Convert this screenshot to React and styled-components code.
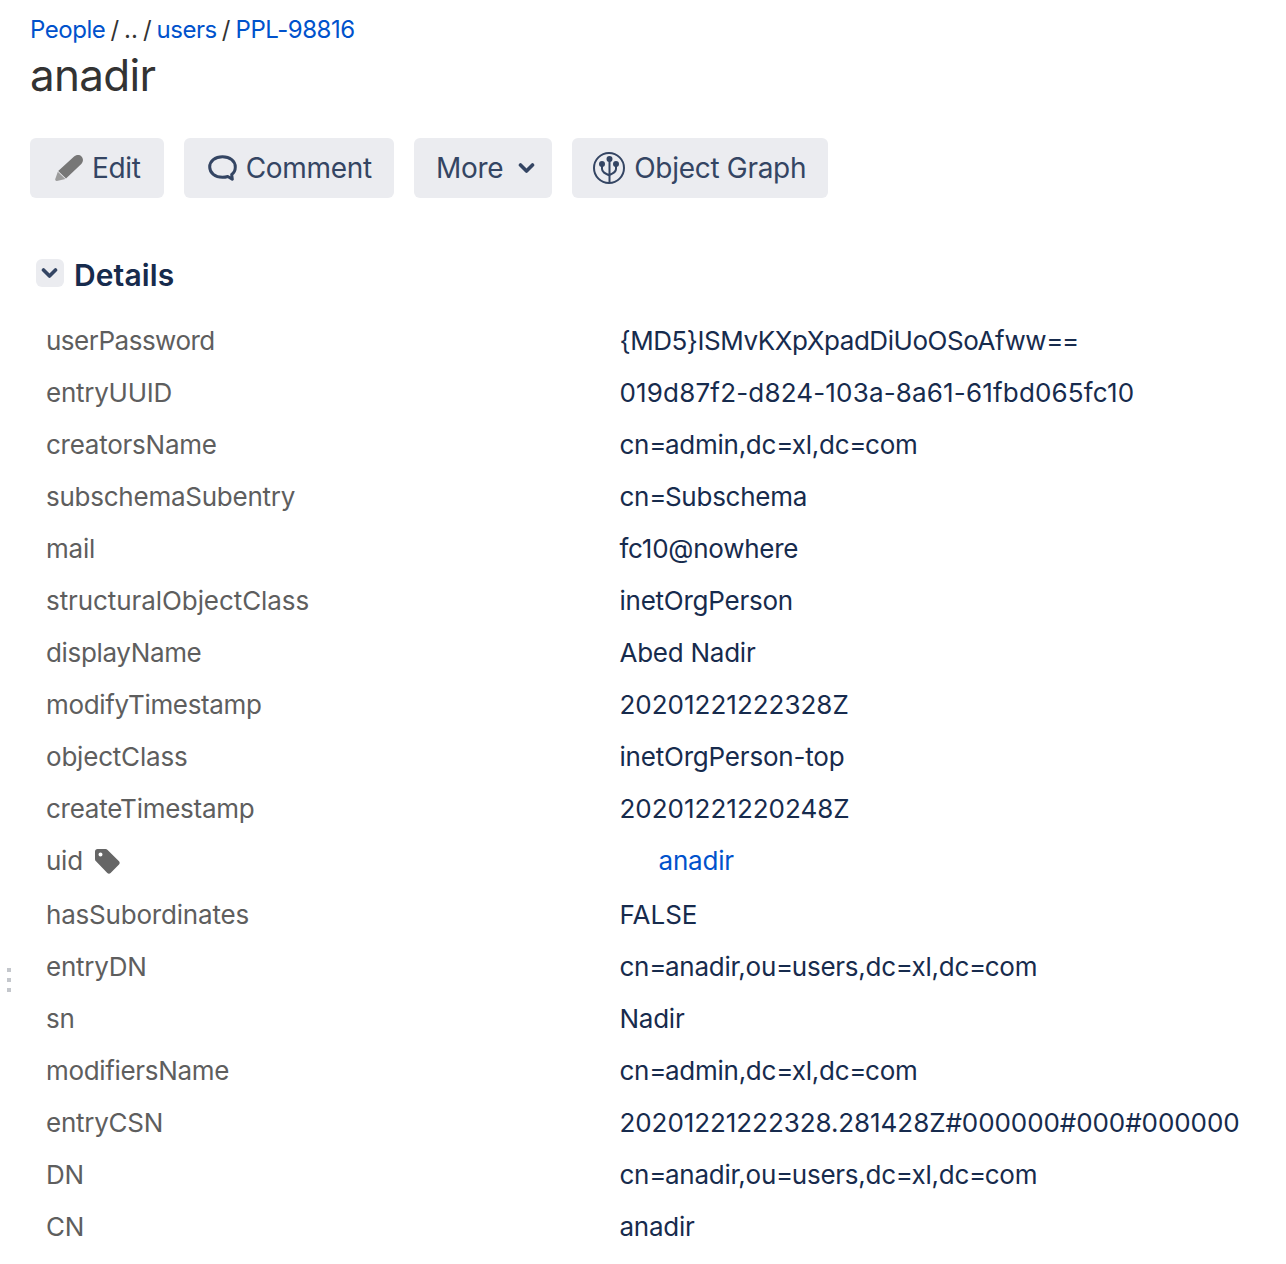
import React from 'react'
import styled, { createGlobalStyle } from 'styled-components'

const GlobalStyle = createGlobalStyle`
  html, body {
    margin: 0;
    padding: 0;
    background: #fff;
    font-family: Inter, "Liberation Sans", sans-serif;
  }
`

const Page = styled.div`
  position: relative;
  width: 1286px;
  height: 1264px;
  padding: 14px 0 0 30px;
  box-sizing: border-box;
  overflow: hidden;
`

const Breadcrumbs = styled.div`
  display: flex;
  gap: 5px;
  font-size: 24px;
  line-height: 32px;
  color: #333;
  a {
    color: #0052cc;
    text-decoration: none;
    letter-spacing: -0.45px;
  }
`

const Title = styled.h1`
  margin: 0;
  height: 60px;
  font-size: 44px;
  line-height: 58px;
  font-weight: 400;
  letter-spacing: -0.7px;
  color: #333;
`

const Toolbar = styled.div`
  display: flex;
  gap: 20px;
  margin-top: 32px;
`

const Button = styled.button`
  display: flex;
  align-items: center;
  gap: ${p => p.$gap || 9}px;
  height: 60px;
  padding: 0 ${p => p.$right || 22}px 0 ${p => p.$left || 22}px;
  border: 0;
  border-radius: 6px;
  background: #ebecf0;
  color: #344563;
  font-family: inherit;
  font-size: 28px;
  letter-spacing: -0.3px;
  svg {
    flex: none;
  }
`

const SectionHeader = styled.div`
  display: flex;
  align-items: center;
  gap: 10px;
  margin: 58px 0 0 6px;
  height: 38px;
`

const Toggle = styled.span`
  display: flex;
  align-items: center;
  justify-content: center;
  width: 28px;
  height: 28px;
  padding-right: 1px;
  box-sizing: border-box;
  border-radius: 6px;
  background: #ebecf0;
  margin-top: -4px;
`

const SectionTitle = styled.h2`
  margin: 0;
  font-size: 30px;
  line-height: 37px;
  font-weight: 600;
  letter-spacing: 0.1px;
  color: #172b4d;
`

const Rows = styled.div`
  margin: 21px 0 0 16px;
`

const Row = styled.div`
  display: grid;
  grid-template-columns: 573.5px 1fr;
  height: ${p => (p.$tall ? 54 : 52)}px;
  font-size: 26px;
  line-height: 52px;
`

const Label = styled.div`
  display: flex;
  align-items: center;
  gap: 12px;
  height: 52px;
  letter-spacing: ${p => p.$track}px;
  color: #5e5e5e;
`

const Value = styled.div`
  color: #172b4d;
  white-space: nowrap;
  letter-spacing: ${p => p.$track}px;
`

const Eq = styled.span`
  letter-spacing: -1.5px;
`

const ValueLink = styled.a`
  margin-left: 39px;
  color: #0052cc;
  text-decoration: none;
`

const Grip = styled.div`
  position: absolute;
  left: 7px;
  top: 968px;
  display: flex;
  flex-direction: column;
  gap: 6px;
  span {
    width: 4px;
    height: 4px;
    background: #c4c7cc;
  }
`

const Chevron = () => (
  <svg width="17" height="12" viewBox="0 0 17 12" fill="none">
    <path d="M2.500 3 8.500 9l6-6" stroke="#344563" strokeWidth="3.600" strokeLinecap="round" strokeLinejoin="round" />
  </svg>
)

const Pencil = () => (
  <svg width="28" height="26" viewBox="0 0 28 26">
    <path d="M18.800 1.800c2.300-2.200 5.800-2.300 7.700-.3 2 2 1.900 5.400-.2 7.500L11 23.500 3.200 16z" fill="#777" />
    <path d="M2.800 16.800l7.600 7.300-8.500 1.800c-1 .2-1.900-.6-1.700-1.600z" fill="#9c9c9c" />
  </svg>
)

const Bubble = () => (
  <svg width="29" height="26" viewBox="0 0 29 26" fill="none">
    <path d="M14.500 1.700C7 1.700 1.700 6.200 1.700 12s5.300 10.300 12.800 10.300c2 0 3.700-.3 5.300-.8l4.500 2.700-.6-4.700c2.500-1.800 3.600-4.300 3.600-7.500C27.300 6.200 22 1.700 14.500 1.700z" stroke="#344563" strokeWidth="3" strokeLinejoin="round" />
  </svg>
)

const GraphIcon = () => (
  <svg width="32" height="32" viewBox="0 0 32 32" fill="none" stroke="#344563" strokeWidth="2">
    <circle cx="16" cy="16" r="15" />
    <path d="M16.500 7v24M9 12v5c0 3 3 4.500 7.500 6.500M23 12v5c0 3-2.500 4-6.500 6" />
    <circle cx="16.500" cy="7" r="2" fill="#344563" />
    <circle cx="9" cy="12" r="2" fill="#344563" />
    <circle cx="23" cy="12" r="2" fill="#344563" />
  </svg>
)

const Tag = () => (
  <svg width="25" height="25" viewBox="0 0 25 25">
    <path d="M2.500 0h8c.8 0 1.500.3 2.100.9l11.400 11.400c.9.900.9 2.400 0 3.300l-8.400 8.400c-.9.900-2.400.9-3.300 0L1 12.300C.4 11.700 0 11 0 10.200V2.500C0 1.100 1.100 0 2.500 0zm3 3.500a2 2 0 1 0 0 4 2 2 0 0 0 0-4z" fill="#666" fillRule="evenodd" />
  </svg>
)

// name, value, value tracking, and name tracking where the default is too far off
const details = [
  ['userPassword', '{MD5}ISMvKXpXpadDiUoOSoAfww==', -0.45, -0.5],
  ['entryUUID', '019d87f2-d824-103a-8a61-61fbd065fc10', 0.17],
  ['creatorsName', 'cn=admin,dc=xl,dc=com', -0.25],
  ['subschemaSubentry', 'cn=Subschema', -0.25],
  ['mail', 'fc10@nowhere', -0.25],
  ['structuralObjectClass', 'inetOrgPerson', -0.25, -0.08],
  ['displayName', 'Abed Nadir', -0.25, -0.35],
  ['modifyTimestamp', '20201221222328Z', 0, -0.33],
  ['objectClass', 'inetOrgPerson-top', -0.2, -0.2],
  ['createTimestamp', '20201221220248Z', 0],
  ['uid', 'anadir', -0.2],
  ['hasSubordinates', 'FALSE', 0, -0.2],
  ['entryDN', 'cn=anadir,ou=users,dc=xl,dc=com', -0.25],
  ['sn', 'Nadir', -0.25],
  ['modifiersName', 'cn=admin,dc=xl,dc=com', -0.25, -0.33],
  ['entryCSN', '20201221222328.281428Z#000000#000#000000', -0.07],
  ['DN', 'cn=anadir,ou=users,dc=xl,dc=com', -0.25],
  ['CN', 'anadir', -0.25],
]

// "=" runs wider in Inter than in the reference, so it gets tightened on its own
const withTightEquals = text =>
  text.split(/(=)/).map((part, i) => (part === '=' ? <Eq key={i}>=</Eq> : part))

export default function App() {
  return (
    <Page>
      <GlobalStyle />
      <Breadcrumbs>
        <a href="#people">People</a>
        <span>/</span>
        <span>..</span>
        <span>/</span>
        <a href="#users">users</a>
        <span>/</span>
        <a href="#ppl">PPL-98816</a>
      </Breadcrumbs>
      <Title>anadir</Title>
      <Toolbar>
        <Button $left={25} $right={23}><Pencil />Edit</Button>
        <Button $left={24} $right={22}><Bubble />Comment</Button>
        <Button $gap={15} $right={17}>More <Chevron /></Button>
        <Button $left={21}><GraphIcon />Object Graph</Button>
      </Toolbar>
      <SectionHeader>
        <Toggle><Chevron /></Toggle>
        <SectionTitle>Details</SectionTitle>
      </SectionHeader>
      <Rows>
        {details.map(([name, value, track, nameTrack = -0.25]) => (
          <Row key={name} $tall={name === 'uid'}>
            <Label $track={nameTrack}>{name}{name === 'uid' && <Tag />}</Label>
            <Value $track={track}>
              {name === 'uid' ? <ValueLink href="#uid">{value}</ValueLink> : withTightEquals(value)}
            </Value>
          </Row>
        ))}
      </Rows>
      <Grip><span /><span /><span /></Grip>
    </Page>
  )
}
